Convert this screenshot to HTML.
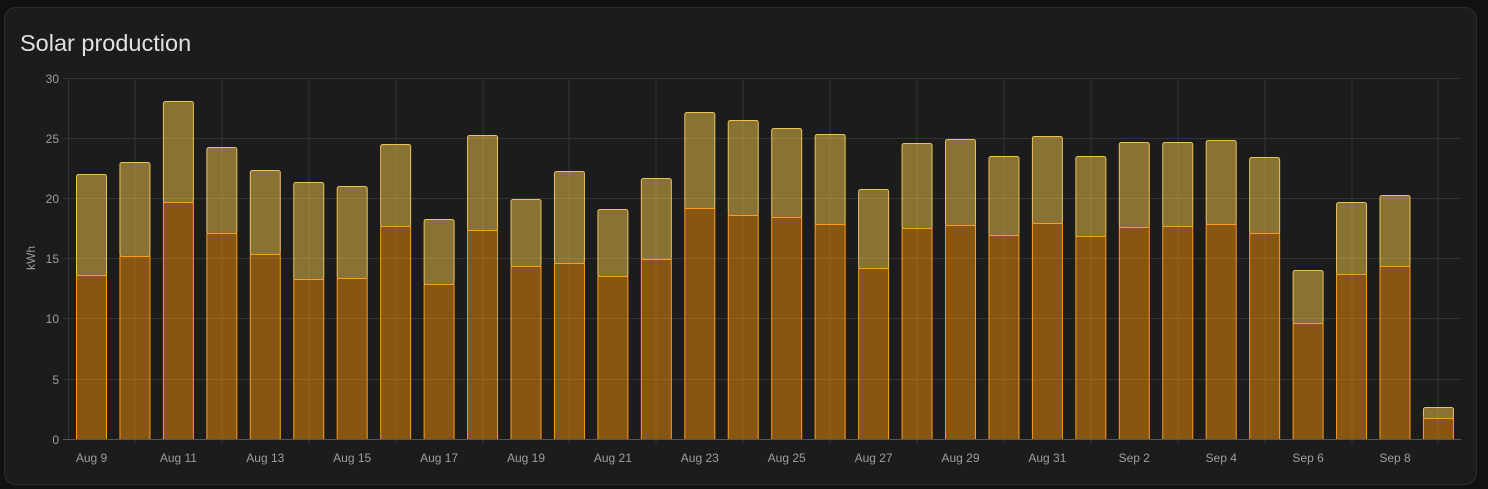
<!DOCTYPE html>
<html><head><style>
body{margin:0;background:#111;width:1488px;height:489px;overflow:hidden;font-family:"Liberation Sans",Roboto,sans-serif}
.card{position:absolute;left:4px;top:7px;width:1471px;height:476px;background:#1c1c1c;border:1px solid #2e2e2e;border-radius:12px}
.t{position:absolute;left:20px;top:30px;font-size:23.5px;color:#e1e1e1}
svg{position:absolute;left:0;top:0}
text{font-family:"Liberation Sans",sans-serif;font-size:12px;fill:#9e9e9e}
</style></head><body>
<div class="card"></div>
<div class="t">Solar production</div>
<svg width="1488" height="489">
<g stroke="#333" stroke-width="1">
<line x1="63" x2="1461" y1="78.5" y2="78.5"/><line x1="63" x2="1461" y1="138.5" y2="138.5"/><line x1="63" x2="1461" y1="198.5" y2="198.5"/><line x1="63" x2="1461" y1="258.5" y2="258.5"/><line x1="63" x2="1461" y1="318.5" y2="318.5"/><line x1="63" x2="1461" y1="379.5" y2="379.5"/>
<line x1="68.5" x2="68.5" y1="78" y2="439"/>
<line x1="135" x2="135" y1="78" y2="444"/><line x1="222" x2="222" y1="78" y2="444"/><line x1="309" x2="309" y1="78" y2="444"/><line x1="396" x2="396" y1="78" y2="444"/><line x1="483" x2="483" y1="78" y2="444"/><line x1="569" x2="569" y1="78" y2="444"/><line x1="656" x2="656" y1="78" y2="444"/><line x1="743" x2="743" y1="78" y2="444"/><line x1="830" x2="830" y1="78" y2="444"/><line x1="917" x2="917" y1="78" y2="444"/><line x1="1004" x2="1004" y1="78" y2="444"/><line x1="1091" x2="1091" y1="78" y2="444"/><line x1="1178" x2="1178" y1="78" y2="444"/><line x1="1265" x2="1265" y1="78" y2="444"/><line x1="1352" x2="1352" y1="78" y2="444"/><line x1="1438" x2="1438" y1="78" y2="444"/>
</g>
<g id="bars"></g>
<line x1="63" x2="1461" y1="439.5" y2="439.5" stroke="#555"/>
<g text-anchor="end">
<text x="59" y="83">30</text><text x="59" y="143">25</text><text x="59" y="203">20</text><text x="59" y="263">15</text><text x="59" y="323">10</text><text x="59" y="384">5</text><text x="59" y="444">0</text>
</g>
<text transform="translate(35,258) rotate(-90)" text-anchor="middle" font-size="11">kWh</text>
<g text-anchor="middle">
<text x="91.5" y="462">Aug 9</text><text x="178.4" y="462">Aug 11</text><text x="265.3" y="462">Aug 13</text><text x="352.2" y="462">Aug 15</text><text x="439.1" y="462">Aug 17</text><text x="526" y="462">Aug 19</text><text x="612.9" y="462">Aug 21</text><text x="699.8" y="462">Aug 23</text><text x="786.7" y="462">Aug 25</text><text x="873.6" y="462">Aug 27</text><text x="960.5" y="462">Aug 29</text><text x="1047.4" y="462">Aug 31</text><text x="1134.3" y="462">Sep 2</text><text x="1221.2" y="462">Sep 4</text><text x="1308.1" y="462">Sep 6</text><text x="1395" y="462">Sep 8</text>
</g>
</svg>
<script>
var d=[[174,275],[162,256],[101,202],[147,233],[170,254],[182,279],[186,278],[144,226],[219,284],[135,230],[199,266],[171,263],[209,276],[178,259],[112,208],[120,215],[128,217],[134,224],[189,268],[143,228],[139,225],[156,235],[136,223],[156,236],[142,227],[142,226],[140,224],[157,233],[270,323],[202,274],[195,266],[407,418]];
var s='';
d.forEach(function(v,i){var x=76.5+i*43.45;
s+='<rect x="'+x+'" y="'+(v[0]+0.5)+'" width="30" height="'+(v[1]-v[0])+'" rx="2" fill="rgba(255,212,80,0.48)" stroke="#e9c25a"/>';
s+='<rect x="'+x+'" y="'+(v[1]+0.5)+'" width="30" height="'+(439-v[1])+'" fill="rgba(255,150,10,0.48)" stroke="#ff9a1a"/>';});
document.getElementById('bars').innerHTML=s;
</script>
</body></html>
